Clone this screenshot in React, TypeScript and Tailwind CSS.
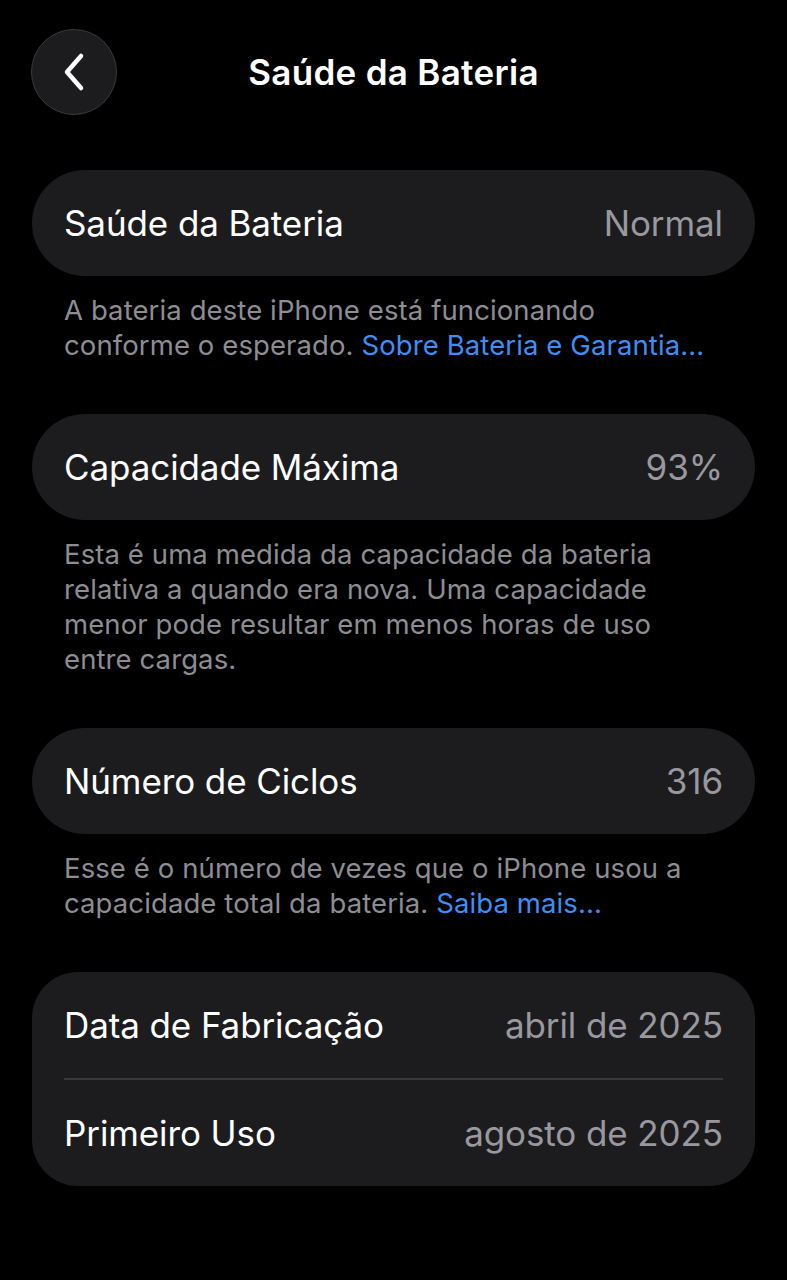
import React from "react";

const font = { fontFamily: "Inter, 'Noto Sans', sans-serif" };

function Row({ label, value }: { label: string; value: string }) {
  return (
    <div className="flex h-[106px] items-center justify-between px-[32px]">
      <span className="text-[35px] tracking-[-0.1px] text-white">{label}</span>
      <span className="text-[35px] tracking-[-0.1px] text-[#98989e]">{value}</span>
    </div>
  );
}

function Card({ children, round = "rounded-[53px]" }: { children: React.ReactNode; round?: string }) {
  return <div className={`mx-[32px] bg-[#1c1c1e] ${round}`}>{children}</div>;
}

function Footer({ children }: { children: React.ReactNode }) {
  return (
    <p className="mx-[64px] mt-[17px] mb-[51px] whitespace-nowrap text-[27.5px] leading-[35px] tracking-[0.1px] text-[#8d8d93]">
      {children}
    </p>
  );
}

export default function App() {
  return (
    <div className="min-h-[1280px] bg-black" style={font}>
      <div className="grid h-[170px] grid-cols-[86px_1fr_86px] items-start px-[31px] pt-[29px]">
        <button className="flex h-[86px] w-[86px] items-center justify-center rounded-full border border-[#3a3a3c] bg-[#1c1c1e]">
          <svg width="30" height="40" viewBox="0 0 30 40" fill="none">
            <path d="M22 4 L8 20 L22 36" stroke="white" strokeWidth="4.5" strokeLinecap="round" strokeLinejoin="round" />
          </svg>
        </button>
        <h1 className="flex h-[86px] items-center justify-center text-[35px] font-semibold tracking-[0.3px] text-white">
          Saúde da Bateria
        </h1>
        <div />
      </div>

      <Card>
        <Row label="Saúde da Bateria" value="Normal" />
      </Card>
      <Footer>
        A bateria deste iPhone está funcionando
        <br />
        conforme o esperado. <span className="text-[#3f8ef5]">Sobre Bateria e Garantia...</span>
      </Footer>

      <Card>
        <Row label="Capacidade Máxima" value="93%" />
      </Card>
      <Footer>
        Esta é uma medida da capacidade da bateria
        <br />
        relativa a quando era nova. Uma capacidade
        <br />
        menor pode resultar em menos horas de uso
        <br />
        entre cargas.
      </Footer>

      <Card>
        <Row label="Número de Ciclos" value="316" />
      </Card>
      <Footer>
        Esse é o número de vezes que o iPhone usou a
        <br />
        capacidade total da bateria. <span className="text-[#3f8ef5]">Saiba mais...</span>
      </Footer>

      <Card round="rounded-[46px]">
        <Row label="Data de Fabricação" value="abril de 2025" />
        <div className="mx-[32px] h-[2px] bg-[#38383a]" />
        <Row label="Primeiro Uso" value="agosto de 2025" />
      </Card>
    </div>
  );
}
